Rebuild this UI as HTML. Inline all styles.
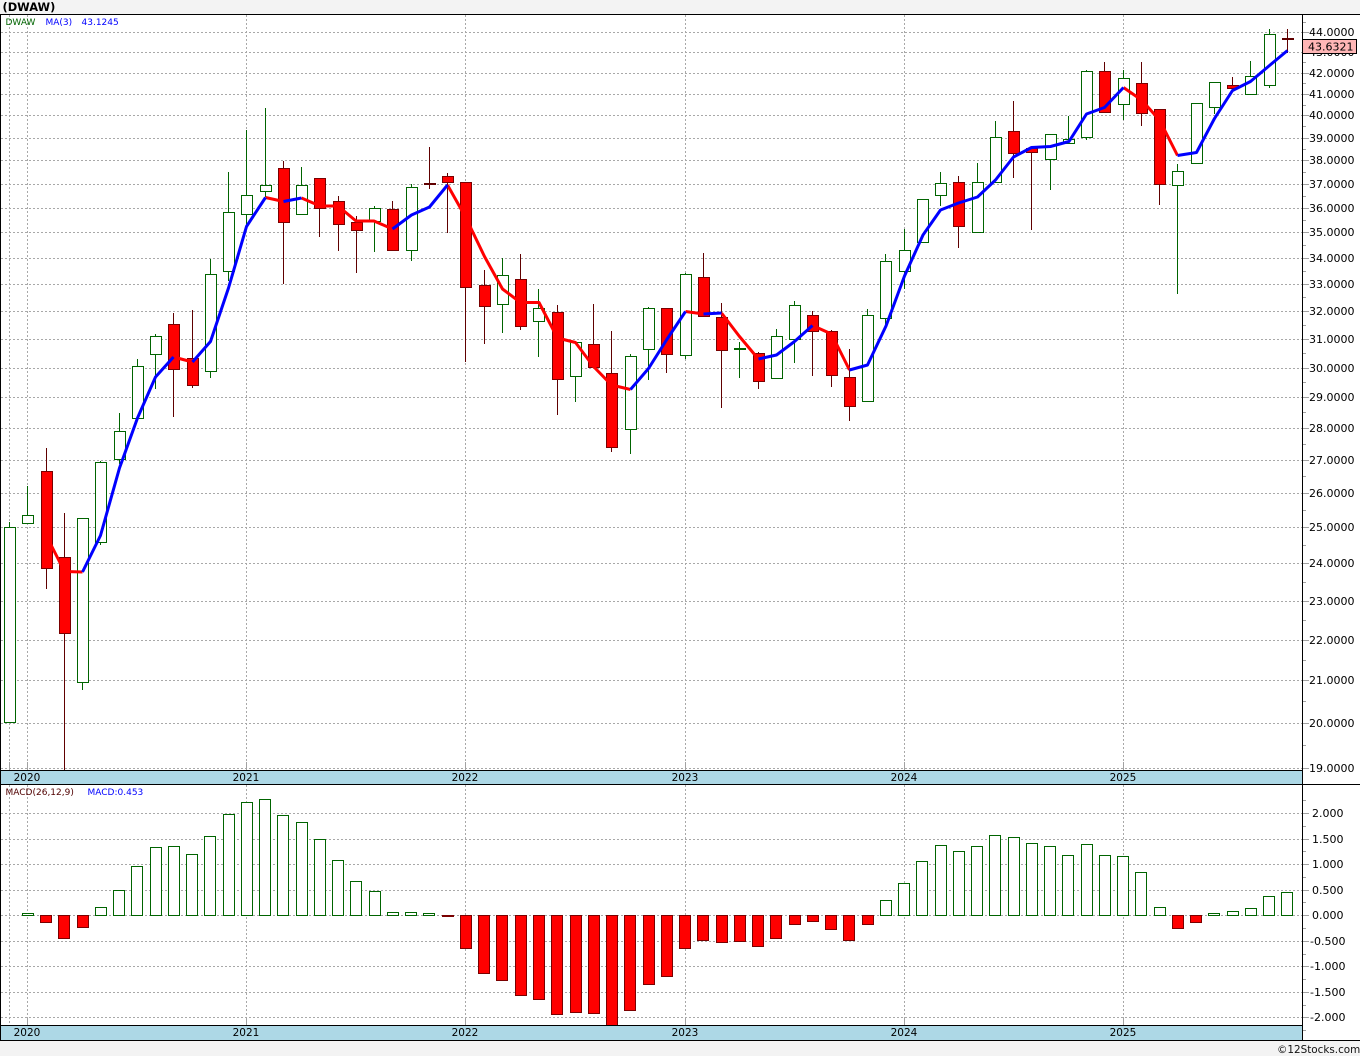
<!DOCTYPE html>
<html lang="en">
<head>
<meta charset="utf-8">
<title>(DWAW)</title>
<style>
html,body{margin:0;padding:0;background:#fff;width:1360px;height:1056px;overflow:hidden}
svg{display:block}
text{font-family:"DejaVu Sans","Liberation Sans",sans-serif;fill:#000}
.ax{font-size:11px}
.yr{font-size:10.5px;text-anchor:middle}
.lg{font-size:9px}
</style>
</head>
<body>
<svg width="1360" height="1056" viewBox="0 0 1360 1056" xmlns="http://www.w3.org/2000/svg">
<rect x="0" y="0" width="1360" height="14" fill="#f3f3f3"/>
<rect x="0" y="1041" width="1360" height="15" fill="#f3f3f3"/>
<text x="2.500" y="11" font-size="11.400" font-weight="700" style="fill:#000">(DWAW)</text>

<!-- grid -->
<g shape-rendering="crispEdges" stroke="#a8a8a8" stroke-dasharray="2 2" fill="none">
<path d="M1 32.500H1302M1 52.500H1302M1 73.500H1302M1 94.500H1302M1 115.500H1302M1 138.500H1302M1 160.500H1302M1 184.500H1302M1 208.500H1302M1 232.500H1302M1 258.500H1302M1 284.500H1302M1 311.500H1302M1 339.500H1302M1 368.500H1302M1 397.500H1302M1 428.500H1302M1 460.500H1302M1 493.500H1302M1 527.500H1302M1 563.500H1302M1 601.500H1302M1 640.500H1302M1 680.500H1302M1 723.500H1302M1 768.500H1302"/>
<path d="M1 813.500H1302M1 839.500H1302M1 864.500H1302M1 890.500H1302M1 915.500H1302M1 941.500H1302M1 966.500H1302M1 992.500H1302M1 1017.500H1302"/>
<path d="M9.500 15V770M27.500 15V770M246.500 15V770M465.500 15V770M685.500 15V770M904.500 15V770M1123.500 15V770"/>
<path d="M9.500 785V1025M27.500 785V1025M246.500 785V1025M465.500 785V1025M685.500 785V1025M904.500 785V1025M1123.500 785V1025"/>
</g>
<g shape-rendering="crispEdges" stroke="#a2a2a2" fill="none">
<path d="M9.500 762V770M27.500 762V770M246.500 762V770M465.500 762V770M685.500 762V770M904.500 762V770M1123.500 762V770"/>
<path d="M27.500 1018V1025M246.500 1018V1025M465.500 1018V1025M685.500 1018V1025M904.500 1018V1025M1123.500 1018V1025"/>
<!-- price ticks -->
<path d="M1303 32.500H1309M1303 52.500H1309M1303 73.500H1309M1303 94.500H1309M1303 115.500H1309M1303 138.500H1309M1303 160.500H1309M1303 184.500H1309M1303 208.500H1309M1303 232.500H1309M1303 258.500H1309M1303 284.500H1309M1303 311.500H1309M1303 339.500H1309M1303 368.500H1309M1303 397.500H1309M1303 428.500H1309M1303 460.500H1309M1303 493.500H1309M1303 527.500H1309M1303 563.500H1309M1303 601.500H1309M1303 640.500H1309M1303 680.500H1309M1303 723.500H1309M1303 768.500H1309"/>
<path d="M1303 22.500H1306M1303 62.500H1306M1303 83.500H1306M1303 105.500H1306M1303 126.500H1306M1303 149.500H1306M1303 172.500H1306M1303 196.500H1306M1303 220.500H1306M1303 245.500H1306M1303 271.500H1306M1303 297.500H1306M1303 325.500H1306M1303 353.500H1306M1303 382.500H1306M1303 412.500H1306M1303 444.500H1306M1303 476.500H1306M1303 510.500H1306M1303 545.500H1306M1303 582.500H1306M1303 620.500H1306M1303 660.500H1306M1303 701.500H1306M1303 745.500H1306"/>
<!-- macd ticks -->
<path d="M1303 813.500H1309M1303 839.500H1309M1303 864.500H1309M1303 890.500H1309M1303 915.500H1309M1303 941.500H1309M1303 966.500H1309M1303 992.500H1309M1303 1017.500H1309"/>
<path d="M1303 800.500H1306M1303 826.500H1306M1303 851.500H1306M1303 877.500H1306M1303 902.500H1306M1303 928.500H1306M1303 954.500H1306M1303 979.500H1306M1303 1005.500H1306M1303 1030.500H1306"/>
</g>

<!-- wicks -->
<g shape-rendering="crispEdges" fill="none">
<path stroke="#006400" d="M9.500 522V722M27.500 486V523M82.500 518V690M100.500 461V545M119.500 413V464M137.500 359V418M155.500 334V389M210.500 259V378M228.500 172V281M246.500 130V227M265.500 108V197M301.500 167V214M374.500 206V252M411.500 184V261M502.500 258V333M538.500 289V357M575.500 342V402M630.500 354V454M648.500 307V380M685.500 273V359M739.500 342V378M776.500 329V378M794.500 301V363M867.500 309V401M885.500 254V327M904.500 229V289M940.500 172V206M977.500 163V233M995.500 121V182M1050.500 134V190M1068.500 116V143M1086.500 70V140M1123.500 70V120M1177.500 164V294M1214.500 82V114M1250.500 61V94M1269.500 29V88"/>
<path stroke="#006400" stroke-width="2" d="M734 349H746"/>
<path stroke="#600000" d="M46.500 448V589M64.500 513V770M173.500 313V417M192.500 310V388M283.500 161V284M319.500 178V237M338.500 196V251M356.500 216V273M392.500 201V250M429.500 147V189M447.500 173V233M465.500 182V362M484.500 270V344M520.500 254V330M557.500 305V415M593.500 304V367M611.500 331V452M666.500 308V373M703.500 253V316M721.500 303V408M758.500 352V389M812.500 311V376M831.500 330V387M849.500 349V421M958.500 176V248M1013.500 101V178M1031.500 148V230M1104.500 62V112M1141.500 62V126M1159.500 109V205M1232.500 77V90M1287.500 29V53"/>
<path stroke="#600000" stroke-width="2" d="M424 184H436M1282 39H1294"/>
</g>

<!-- bodies -->
<g shape-rendering="crispEdges">
<path fill="#fff" stroke="#006400" d="M4.500 527.500h11v195h-11zM22.500 515.500h11v8h-11zM77.500 518.500h11v164h-11zM95.500 462.500h11v80h-11zM114.500 431.500h11v28h-11zM132.500 366.500h11v52h-11zM150.500 336.500h11v18h-11zM205.500 274.500h11v97h-11zM223.500 212.500h11v59h-11zM241.500 195.500h11v19h-11zM260.500 185.500h11v6h-11zM296.500 185.500h11v29h-11zM369.500 208.500h11v13h-11zM406.500 187.500h11v63h-11zM497.500 275.500h11v29h-11zM533.500 308.500h11v13h-11zM570.500 342.500h11v34h-11zM625.500 356.500h11v73h-11zM643.500 308.500h11v41h-11zM680.500 274.500h11v81h-11zM771.500 336.500h11v42h-11zM789.500 305.500h11v34h-11zM862.500 315.500h11v86h-11zM880.500 261.500h11v57h-11zM899.500 250.500h11v21h-11zM917.500 199.500h11v43h-11zM935.500 183.500h11v12h-11zM972.500 182.500h11v50h-11zM990.500 137.500h11v45h-11zM1045.500 134.500h11v25h-11zM1063.500 139.500h11v4h-11zM1081.500 71.500h11v66h-11zM1118.500 78.500h11v26h-11zM1172.500 171.500h11v14h-11zM1191.500 103.500h11v60h-11zM1209.500 82.500h11v25h-11zM1245.500 76.500h11v18h-11zM1264.500 34.500h11v51h-11z"/>
<path fill="#f00" stroke="#7a0000" d="M41.500 471.500h11v97h-11zM59.500 557.500h11v76h-11zM168.500 324.500h11v45h-11zM187.500 358.500h11v27h-11zM278.500 168.500h11v54h-11zM314.500 178.500h11v30h-11zM333.500 201.500h11v23h-11zM351.500 222.500h11v8h-11zM387.500 209.500h11v41h-11zM442.500 176.500h11v6h-11zM460.500 182.500h11v105h-11zM479.500 285.500h11v21h-11zM515.500 279.500h11v47h-11zM552.500 312.500h11v67h-11zM588.500 344.500h11v23h-11zM606.500 373.500h11v74h-11zM661.500 308.500h11v46h-11zM698.500 277.500h11v39h-11zM716.500 317.500h11v33h-11zM753.500 353.500h11v28h-11zM807.500 315.500h11v16h-11zM826.500 331.500h11v44h-11zM844.500 377.500h11v29h-11zM953.500 182.500h11v44h-11zM1008.500 131.500h11v22h-11zM1026.500 148.500h11v4h-11zM1099.500 71.500h11v41h-11zM1136.500 83.500h11v30h-11zM1154.500 109.500h11v75h-11zM1227.500 85.500h11v3h-11z"/>
</g>

<!-- MA(3) -->
<g fill="none" stroke-width="3" stroke-linejoin="round" stroke-linecap="butt">
<path stroke="#f00" d="M46.500 536L64.500 571.500L82.500 572M173.500 357L192.500 362M265.500 197.500L283.500 201.500M301.500 198L320 206L338 206L356 221L374 221L392.500 229M447.500 185L465.500 217L484.500 256.500L502.500 289L520.500 302.500L539 302.500L557.500 338L575.500 342.500L593.500 366.500L611.500 385L630.500 389.500M685.500 311.500L703.500 314M721.500 313L739.500 336.500L755 355M812.500 325.500L831.500 334L849.500 370M1123.500 87.500L1141.500 100L1159.500 120L1177.500 155.500"/>
<path stroke="#00f" d="M82.500 572L100.500 535.500L119.500 468L137.500 418L155.500 377L173.500 357M192.500 362L210.500 341.500L228.500 288L246.500 226.500L265.500 197.500M283.500 201.500L301.500 198M392.500 229L411.500 215L429.500 207L447.500 185M630.500 389.500L648.500 368.500L666.500 340L685.500 311.500M703.500 314L721.500 313M758.500 359L776.500 355L794.500 341.500L812.500 325.500M849.500 370L867.500 365L886 326L904.500 276L923 235L940.500 210L958.500 203L977.500 197L995.500 180L1013.500 157L1031.500 147.500L1050.500 146.500L1069 141.500L1086.500 114L1104.500 107.500L1123.500 87.500M1177.500 155.500L1196.500 152.500L1214.500 118.500L1232.500 90.500L1250.500 81.500L1269.500 65.500L1287.500 50.500"/>
</g>

<!-- MACD bars -->
<g shape-rendering="crispEdges">
<path fill="#fff" stroke="#006400" d="M22.500 913.500h11v2h-11zM95.500 907.500h11v8h-11zM113.500 890.500h11v25h-11zM131.500 866.500h11v49h-11zM150.500 847.500h11v68h-11zM168.500 846.500h11v69h-11zM186.500 854.500h11v61h-11zM204.500 836.500h11v79h-11zM223.500 814.500h11v101h-11zM241.500 802.500h11v113h-11zM259.500 799.500h11v116h-11zM277.500 815.500h11v100h-11zM296.500 822.500h11v93h-11zM314.500 839.500h11v76h-11zM332.500 860.500h11v55h-11zM350.500 881.500h11v34h-11zM369.500 891.500h11v24h-11zM387.500 912.500h11v3h-11zM405.500 912.500h11v3h-11zM423.500 913.500h11v2h-11zM880.500 900.500h11v15h-11zM898.500 883.500h11v32h-11zM916.500 861.500h11v54h-11zM935.500 845.500h11v70h-11zM953.500 851.500h11v64h-11zM971.500 846.500h11v69h-11zM989.500 835.500h11v80h-11zM1008.500 837.500h11v78h-11zM1026.500 843.500h11v72h-11zM1044.500 846.500h11v69h-11zM1062.500 855.500h11v60h-11zM1081.500 844.500h11v71h-11zM1099.500 855.500h11v60h-11zM1117.500 856.500h11v59h-11zM1135.500 872.500h11v43h-11zM1154.500 907.500h11v8h-11zM1208.500 913.500h11v2h-11zM1227.500 911.500h11v4h-11zM1245.500 908.500h11v7h-11zM1263.500 896.500h11v19h-11zM1281.500 892.500h11v23h-11z"/>
<path fill="#f00" stroke="#7a0000" d="M40.500 915.500h11v7h-11zM58.500 915.500h11v23h-11zM77.500 915.500h11v12h-11zM442.500 915.500h11v1h-11zM460.500 915.500h11v33h-11zM478.500 915.500h11v58h-11zM496.500 915.500h11v65h-11zM515.500 915.500h11v80h-11zM533.500 915.500h11v84h-11zM551.500 915.500h11v99h-11zM570.500 915.500h11v97h-11zM588.500 915.500h11v98h-11zM606.500 915.500h11v110h-11zM624.500 915.500h11v95h-11zM643.500 915.500h11v69h-11zM661.500 915.500h11v61h-11zM679.500 915.500h11v33h-11zM697.500 915.500h11v25h-11zM716.500 915.500h11v27h-11zM734.500 915.500h11v26h-11zM752.500 915.500h11v31h-11zM770.500 915.500h11v23h-11zM789.500 915.500h11v9h-11zM807.500 915.500h11v6h-11zM825.500 915.500h11v14h-11zM843.500 915.500h11v25h-11zM862.500 915.500h11v9h-11zM1172.500 915.500h11v13h-11zM1190.500 915.500h11v7h-11z"/>
</g>

<!-- bands & frame -->
<g shape-rendering="crispEdges">
<rect x="0" y="770" width="1302" height="14" fill="#add8e6"/>
<rect x="0" y="1025" width="1302" height="15" fill="#add8e6"/>
<path fill="none" stroke="#000" d="M0 14.500H1360M0.500 14V1040M1302.500 14V1040M0 770.500H1302M0 784.500H1360M0 1025.500H1302M0 1040.500H1360"/>
</g>

<!-- legends -->
<text class="lg" x="5.500" y="25" style="fill:#006400">DWAW</text>
<text class="lg" x="45.500" y="25" style="fill:#0000ff">MA(3)</text>
<text class="lg" x="81.500" y="25" style="fill:#0000ff">43.1245</text>
<text class="lg" x="5.500" y="795" style="fill:#500000">MACD(26,12,9)</text>
<text class="lg" x="87.500" y="795" style="fill:#0000ff">MACD:0.453</text>

<!-- years -->
<text class="yr" x="27" y="781">2020</text>
<text class="yr" x="246" y="781">2021</text>
<text class="yr" x="465" y="781">2022</text>
<text class="yr" x="685" y="781">2023</text>
<text class="yr" x="904" y="781">2024</text>
<text class="yr" x="1123" y="781">2025</text>
<text class="yr" x="27" y="1036">2020</text>
<text class="yr" x="246" y="1036">2021</text>
<text class="yr" x="465" y="1036">2022</text>
<text class="yr" x="685" y="1036">2023</text>
<text class="yr" x="904" y="1036">2024</text>
<text class="yr" x="1123" y="1036">2025</text>

<!-- price axis -->
<g class="ax">
<text x="1309" y="36">44.0000</text>
<text x="1309" y="56">43.0000</text>
<text x="1309" y="77">42.0000</text>
<text x="1309" y="98">41.0000</text>
<text x="1309" y="119">40.0000</text>
<text x="1309" y="142">39.0000</text>
<text x="1309" y="164">38.0000</text>
<text x="1309" y="188">37.0000</text>
<text x="1309" y="212">36.0000</text>
<text x="1309" y="236">35.0000</text>
<text x="1309" y="262">34.0000</text>
<text x="1309" y="288">33.0000</text>
<text x="1309" y="315">32.0000</text>
<text x="1309" y="343">31.0000</text>
<text x="1309" y="372">30.0000</text>
<text x="1309" y="401">29.0000</text>
<text x="1309" y="432">28.0000</text>
<text x="1309" y="464">27.0000</text>
<text x="1309" y="497">26.0000</text>
<text x="1309" y="531">25.0000</text>
<text x="1309" y="567">24.0000</text>
<text x="1309" y="605">23.0000</text>
<text x="1309" y="644">22.0000</text>
<text x="1309" y="684">21.0000</text>
<text x="1309" y="727">20.0000</text>
<text x="1309" y="772">19.0000</text>
</g>
<rect x="1302.500" y="39.500" width="54" height="14" fill="#ffb6b6" stroke="#000" shape-rendering="crispEdges"/>
<text class="ax" x="1308" y="50.500">43.6321</text>

<!-- macd axis -->
<g class="ax">
<text x="1312" y="817">2.000</text>
<text x="1312" y="843">1.500</text>
<text x="1312" y="868">1.000</text>
<text x="1312" y="894">0.500</text>
<text x="1312" y="919">0.000</text>
<text x="1310" y="945">-0.500</text>
<text x="1310" y="970">-1.000</text>
<text x="1310" y="996">-1.500</text>
<text x="1310" y="1021">-2.000</text>
</g>

<text x="1277" y="1053" font-size="10.400" style="fill:#111">©12Stocks.com</text>
</svg>
</body>
</html>
